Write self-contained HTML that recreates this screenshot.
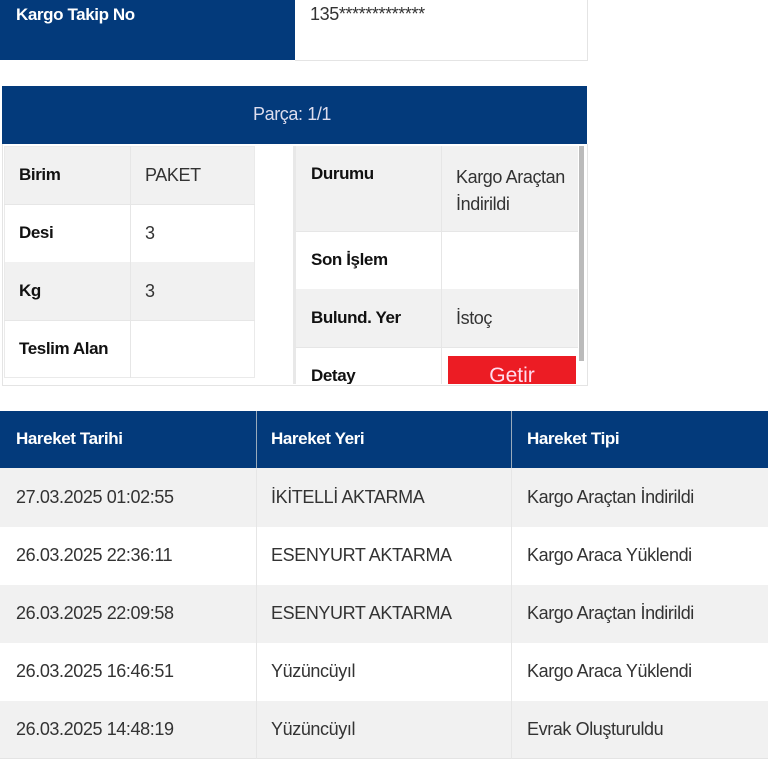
<!DOCTYPE html>
<html><head><meta charset="utf-8"><style>
*{margin:0;padding:0;box-sizing:border-box}
body{width:768px;height:768px;background:#fff;font-family:"Liberation Sans",sans-serif;color:#333;position:relative;overflow:hidden;font-size:18px}
.a{position:absolute}
.blue{background:#033a7b;color:#fff}
.g{background:#f1f1f1}
.t{position:absolute;white-space:nowrap;letter-spacing:-0.4px;line-height:20px}
.b{font-weight:bold;color:#111;font-size:17px}
</style></head><body>
<div class="a blue" style="left:0;top:0;width:295px;height:60px"></div>
<div class="t" style="left:16px;top:5px;color:#fff;font-weight:bold;font-size:17px">Kargo Takip No</div>
<div class="a" style="left:295px;top:0;width:293px;height:61px;border:1px solid #e4e4e4;border-top:none;border-left:none"></div>
<div class="t" style="left:310px;top:4px;font-size:18px">135*************</div>

<div class="a blue" style="left:2px;top:86px;width:585px;height:58px"></div>
<div class="t" style="left:253px;top:104px;color:#dde;font-size:18px">Parça: 1/1</div>
<div class="a" style="left:2px;top:144px;width:586px;height:242px;border:1px solid #e4e4e4;border-top:none"></div>

<div class="a g" style="left:4px;top:146px;width:251px;height:58px"></div>
<div class="a g" style="left:4px;top:262px;width:251px;height:58px"></div>
<div class="a" style="left:4px;top:146px;width:251px;height:232px;border:1px solid #eaeaea"></div>
<div class="a" style="left:130px;top:146px;width:1px;height:232px;background:#e6e6e6"></div>
<div class="a" style="left:4px;top:204px;width:251px;height:1px;background:#e6e6e6"></div>
<div class="a" style="left:4px;top:320px;width:251px;height:1px;background:#e6e6e6"></div>
<div class="t b" style="left:19px;top:165px">Birim</div><div class="t" style="left:145px;top:165px">PAKET</div>
<div class="t b" style="left:19px;top:223px">Desi</div><div class="t" style="left:145px;top:223px">3</div>
<div class="t b" style="left:19px;top:281px">Kg</div><div class="t" style="left:145px;top:281px">3</div>
<div class="t b" style="left:19px;top:339px">Teslim Alan</div>

<div class="a" style="left:293px;top:146px;width:3px;height:238px;background:#e8e8e8"></div>
<div class="a g" style="left:296px;top:146px;width:282px;height:85px"></div>
<div class="a g" style="left:296px;top:289px;width:282px;height:58px"></div>
<div class="a" style="left:441px;top:146px;width:1px;height:238px;background:#e6e6e6"></div>
<div class="a" style="left:296px;top:231px;width:282px;height:1px;background:#e6e6e6"></div>
<div class="a" style="left:296px;top:347px;width:282px;height:1px;background:#e6e6e6"></div>
<div class="a" style="left:579px;top:146px;width:5px;height:215px;background:#bbb"></div>
<div class="t b" style="left:311px;top:164px">Durumu</div>
<div class="t" style="left:456px;top:164px;line-height:27px">Kargo Araçtan<br>İndirildi</div>
<div class="t b" style="left:311px;top:250px">Son İşlem</div>
<div class="t b" style="left:311px;top:308px">Bulund. Yer</div><div class="t" style="left:456px;top:308px">İstoç</div>
<div class="a" style="left:296px;top:347px;width:282px;height:37px;overflow:hidden">
<div class="t b" style="left:15px;top:19px">Detay</div>
<div class="a" style="left:152px;top:9px;width:128px;height:40px;background:#ec1c24;color:#fde;font-size:21px;text-align:center;padding-top:8px">Getir</div>
</div>

<div class="a blue" style="left:0;top:411px;width:768px;height:57px"></div>
<div class="a" style="left:256px;top:411px;width:1px;height:57px;background:#9ab"></div>
<div class="a" style="left:511px;top:411px;width:1px;height:57px;background:#9ab"></div>
<div class="t" style="left:16px;top:429px;color:#fff;font-weight:bold;font-size:17px">Hareket Tarihi</div>
<div class="t" style="left:271px;top:429px;color:#fff;font-weight:bold;font-size:17px">Hareket Yeri</div>
<div class="t" style="left:527px;top:429px;color:#fff;font-weight:bold;font-size:17px">Hareket Tipi</div>

<div class="a g" style="left:0;top:468px;width:768px;height:59px"></div>
<div class="a g" style="left:0;top:585px;width:768px;height:58px"></div>
<div class="a g" style="left:0;top:701px;width:768px;height:58px"></div>
<div class="a" style="left:0;top:758px;width:768px;height:1px;background:#e4e4e4"></div>
<div class="a" style="left:256px;top:468px;width:1px;height:291px;background:#e6e6e6"></div>
<div class="a" style="left:511px;top:468px;width:1px;height:291px;background:#e6e6e6"></div>

<div class="t" style="left:16px;top:487px">27.03.2025 01:02:55</div><div class="t" style="left:271px;top:487px">İKİTELLİ AKTARMA</div><div class="t" style="left:527px;top:487px">Kargo Araçtan İndirildi</div>
<div class="t" style="left:16px;top:545px">26.03.2025 22:36:11</div><div class="t" style="left:271px;top:545px">ESENYURT AKTARMA</div><div class="t" style="left:527px;top:545px">Kargo Araca Yüklendi</div>
<div class="t" style="left:16px;top:603px">26.03.2025 22:09:58</div><div class="t" style="left:271px;top:603px">ESENYURT AKTARMA</div><div class="t" style="left:527px;top:603px">Kargo Araçtan İndirildi</div>
<div class="t" style="left:16px;top:661px">26.03.2025 16:46:51</div><div class="t" style="left:271px;top:661px">Yüzüncüyıl</div><div class="t" style="left:527px;top:661px">Kargo Araca Yüklendi</div>
<div class="t" style="left:16px;top:719px">26.03.2025 14:48:19</div><div class="t" style="left:271px;top:719px">Yüzüncüyıl</div><div class="t" style="left:527px;top:719px">Evrak Oluşturuldu</div>
</body></html>
